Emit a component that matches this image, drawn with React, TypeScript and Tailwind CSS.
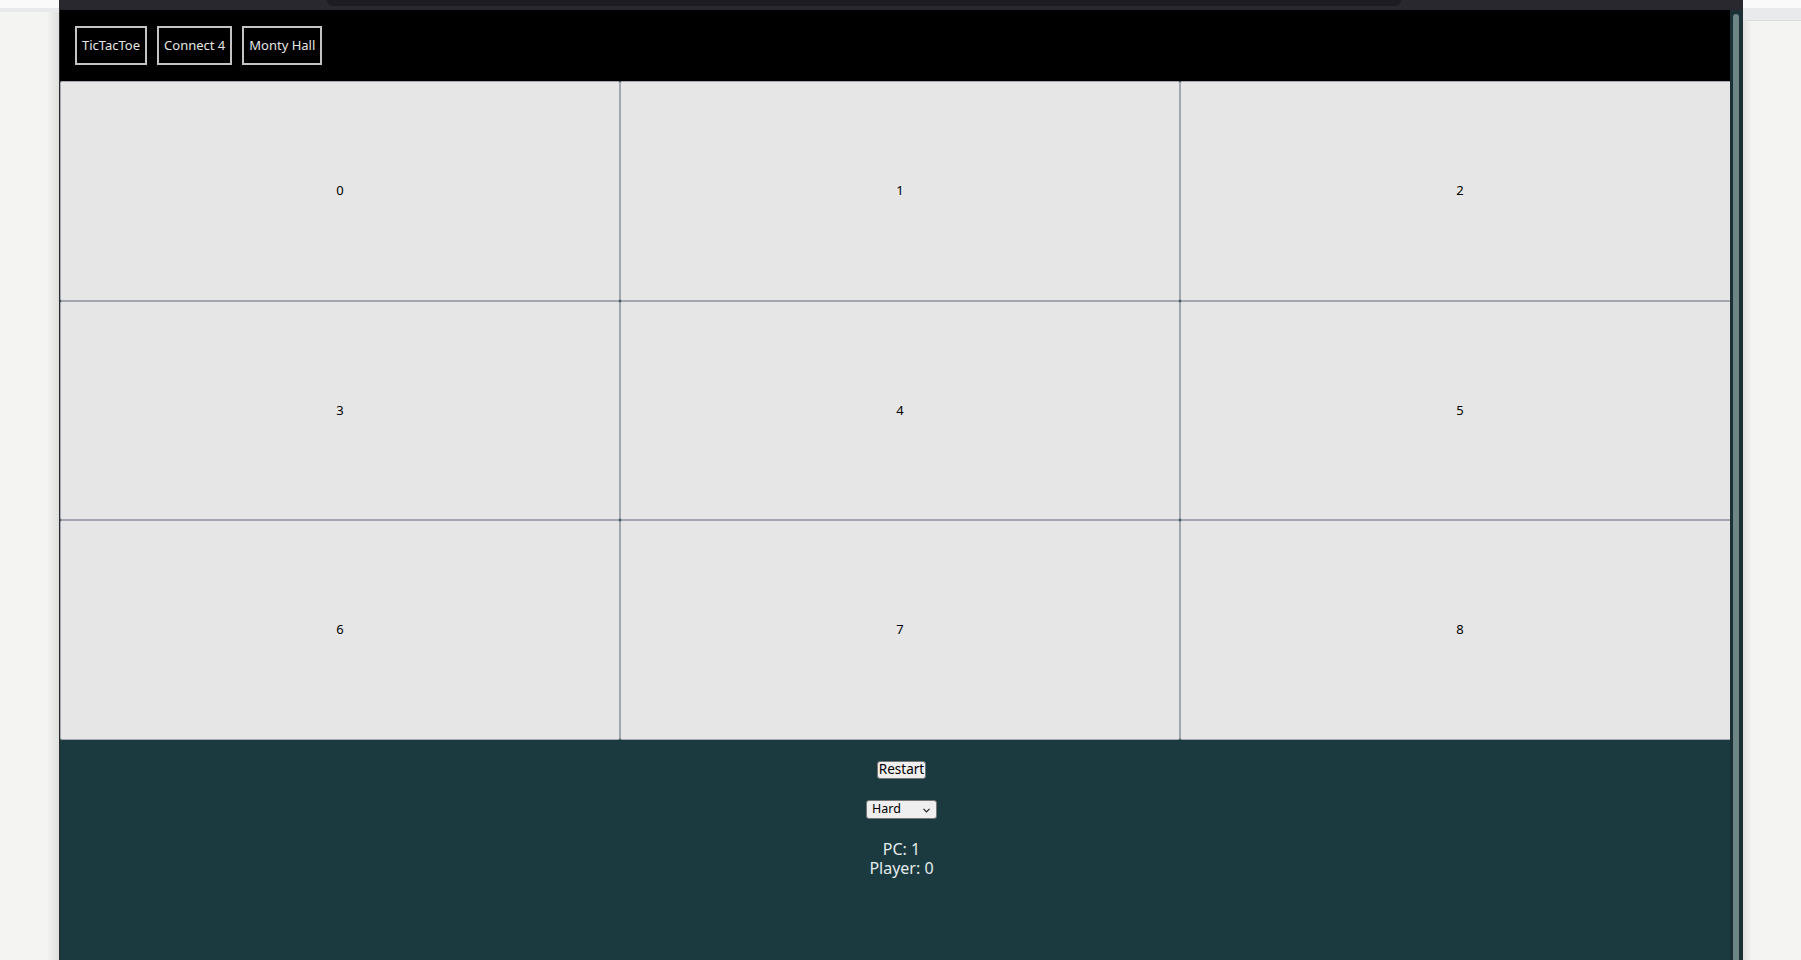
import React, { useState } from "react";

const games = ["TicTacToe", "Connect 4", "Monty Hall"];

const Cell = ({ n }: { n: number }) => (
  <div className="flex items-center justify-center border border-[#a3a7af] rounded-[2px] bg-[#e5e6e5] text-[13px] text-black">
    {n}
  </div>
);

export default function App() {
  const [level, setLevel] = useState("Hard");
  const cells = [0, 1, 2, 3, 4, 5, 6, 7, 8];

  return (
    <div
      className="flex h-[960px] w-full overflow-hidden bg-[#f4f5f3]"
      style={{ fontFamily: "'Noto Sans', 'Open Sans', sans-serif" }}
    >
      {/* left gutter */}
      <div className="flex w-[59px] shrink-0 flex-col">
        <div className="h-2 bg-[#f9faf9]" />
        <div className="h-1 bg-[#e8e9ea]" />
        <div className="flex-1 bg-gradient-to-r from-[#f4f5f3] from-80% to-[#dfe0de]" />
      </div>

      {/* window */}
      <div className="flex w-[1684px] shrink-0 flex-col border-l border-[#2b2b2b]">
        {/* browser chrome */}
        <div className="flex h-[10px] bg-[#29282f]">
          <div className="ml-[267px] h-[6px] w-[1074px] rounded-b-md bg-[#1d1c22]" />
        </div>

        <div className="relative flex flex-1 flex-col overflow-hidden">
          {/* header */}
          <div className="flex h-[71px] w-[1683px] items-center gap-[10px] bg-black pl-[15px]">
            {games.map((g) => (
              <button
                key={g}
                className="h-[39px] border-2 border-[#c4c4c4] px-[5px] text-[13px] text-[#e6e6e6]"
              >
                {g}
              </button>
            ))}
          </div>

          {/* board */}
          <div className="grid h-[659px] w-[1680px] grid-cols-3 grid-rows-3 bg-[#2a4a50]">
            {cells.map((c) => (
              <Cell key={c} n={c} />
            ))}
          </div>

          {/* controls */}
          <div className="flex w-[1683px] flex-1 flex-col items-center bg-[#1a3a40] pt-[21px] text-[#e4ecec]">
            <button className="h-[18px] rounded-[3px] border border-[#767676] bg-[#efefef] px-[1px] text-[13.5px] leading-none text-black">
              Restart
            </button>
            <div className="relative mt-[21px] flex">
              <select
                value={level}
                onChange={(e) => setLevel(e.target.value)}
                className="h-[19px] w-[71px] appearance-none rounded-[3px] border border-[#767676] bg-[#efefef] pl-[5px] text-[12.5px] leading-none text-black"
              >
                <option>Easy</option>
                <option>Medium</option>
                <option>Hard</option>
              </select>
              <svg
                className="pointer-events-none absolute right-[7px] top-[8px]"
                width="7"
                height="5"
                viewBox="0 0 7 5"
              >
                <path d="M0.5 0.8 L3.5 3.8 L6.5 0.8" fill="none" stroke="#222" strokeWidth="1.2" />
              </svg>
            </div>
            <div className="mt-[21px] text-center text-[16px] leading-[19px]">
              <p>PC: 1</p>
              <p>Player: 0</p>
            </div>
          </div>

          {/* scrollbar */}
          <div className="absolute right-0 top-0 bottom-0 w-[13px] bg-[#1a3035] pl-[3px] pr-[4px] pt-[4px]">
            <div className="h-full rounded-t-full bg-[#6e8585]" />
          </div>
        </div>
      </div>

      {/* right gutter */}
      <div className="flex flex-1 flex-col">
        <div className="h-2 bg-[#f9faf9]" />
        <div className="h-[13px] border-b border-[#dcdddd] bg-[#e9eaeb]" />
        <div className="flex-1 bg-gradient-to-r from-[#dfe0de] via-[#f4f5f3] via-15% to-[#f4f5f3]" />
      </div>
    </div>
  );
}
